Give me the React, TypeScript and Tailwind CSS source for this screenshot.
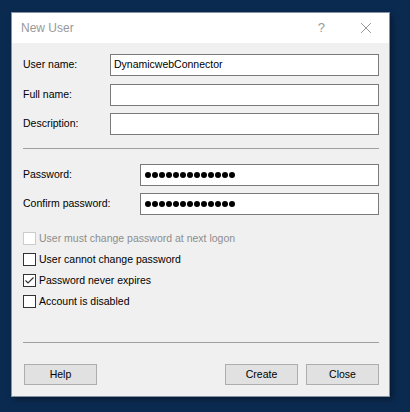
import React from 'react';

const font = { fontFamily: '"Liberation Sans", Arial, sans-serif' };

function Field({ label, value, labelWidth = 'w-[87px]', className = '' }: { label: string; value?: React.ReactNode; labelWidth?: string; className?: string }) {
    return (
        <div className={`flex items-center ${className}`}>
            <span className={`${labelWidth} shrink-0 text-[10.5px] text-black`}>{label}</span>
            <div className="flex h-[22px] flex-1 items-center border border-[#7a7a7a] bg-white pl-[3px] text-[10.5px] text-black">
                {value}
            </div>
        </div>
    );
}

function Dots() {
    return (
        <div className="flex gap-[1px] pl-[1px]">
            {Array.from({ length: 13 }).map((_, i) => (
                <span key={i} className="h-[6px] w-[6px] rounded-full bg-black" />
            ))}
        </div>
    );
}

function Check({ label, checked = false, disabled = false }: { label: string; checked?: boolean; disabled?: boolean }) {
    return (
        <div className="flex h-[21px] items-center">
            <div className={`flex h-[13px] w-[13px] items-center justify-center border bg-white ${disabled ? 'border-[#cccccc]' : 'border-[#333333]'}`}>
                {checked && (
                    <svg width="11" height="11" viewBox="0 0 11 11">
                        <path d="M1.5 5.5 L4 8 L9.5 2.5" fill="none" stroke="#333" strokeWidth="1.2" />
                    </svg>
                )}
            </div>
            <span className={`ml-[3px] text-[10.5px] ${disabled ? 'text-[#8d8d8d]' : 'text-black'}`}>{label}</span>
        </div>
    );
}

function Button({ children }: { children: React.ReactNode }) {
    return (
        <button className="flex h-[21px] w-[73px] items-center justify-center border border-[#adadad] bg-[#e1e1e1] text-[10.5px] text-black">
            {children}
        </button>
    );
}

export default function App() {
    return (
        <div className="h-[412px] w-[410px] bg-[#0b2a50] pl-[11px] pt-[12px]" style={font}>
            <div className="flex h-[385px] w-[379px] flex-col border border-[#8592a3] bg-[#f0f0f0] shadow-[3px_3px_6px_rgba(0,0,0,0.35)]">
                {/* Title bar */}
                <div className="flex h-[30px] shrink-0 items-center bg-white pl-[9px]">
                    <span className="text-[12px] text-[#999999]">New User</span>
                    <span className="ml-auto mr-[35px] text-[13px] text-[#999999]">?</span>
                    <svg className="mr-[17px]" width="12" height="12" viewBox="0 0 12 12">
                        <path d="M1 1 L11 11 M11 1 L1 11" stroke="#999" strokeWidth="1" />
                    </svg>
                </div>

                {/* Body */}
                <div className="flex flex-1 flex-col pl-[11px] pr-[10px] pt-[11px]">
                    <Field label="User name:" value="DynamicwebConnector" />
                    <Field label="Full name:" className="mt-[8px]" />
                    <Field label="Description:" className="mt-[7px]" />

                    <div className="mt-[13px] h-[1px] bg-[#a0a0a0]" />

                    <Field label="Password:" labelWidth="w-[117px]" value={<Dots />} className="mt-[15px]" />
                    <Field label="Confirm password:" labelWidth="w-[117px]" value={<Dots />} className="mt-[7px]" />

                    <div className="mt-[13px] flex flex-col">
                        <Check label="User must change password at next logon" disabled />
                        <Check label="User cannot change password" />
                        <Check label="Password never expires" checked />
                        <Check label="Account is disabled" />
                    </div>

                    <div className="mt-[30px] h-[1px] bg-[#a0a0a0]" />

                    <div className="mt-[21px] flex items-center pl-[1px]">
                        <Button>Help</Button>
                        <div className="ml-auto flex gap-[8px]">
                            <Button>Create</Button>
                            <Button>Close</Button>
                        </div>
                    </div>
                </div>
            </div>
        </div>
    );
}
